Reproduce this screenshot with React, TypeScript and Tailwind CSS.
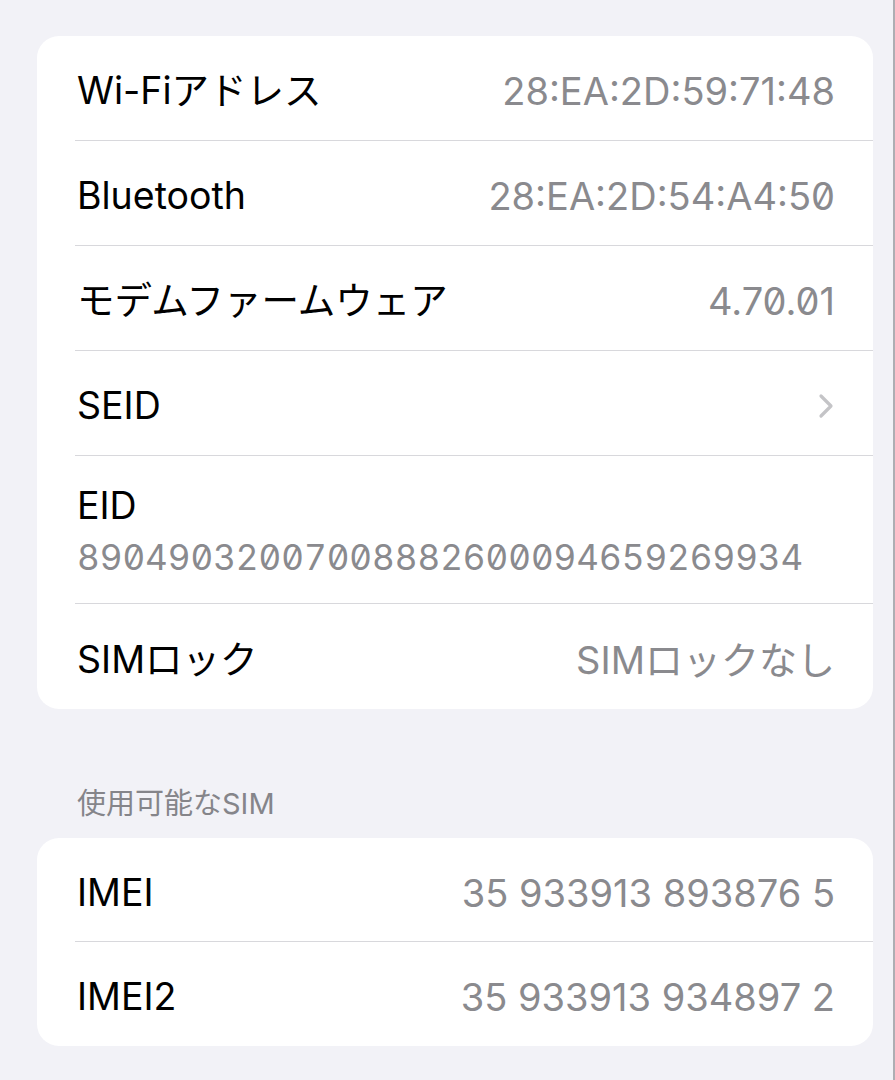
import React from 'react';

const font = { fontFamily: 'Inter, "Noto Sans CJK JP", sans-serif' };

type Row = { label: string; value?: string; chevron?: boolean; stacked?: boolean };

const deviceRows: Row[] = [
  { label: 'Wi-Fiアドレス', value: '28:EA:2D:59:71:48' },
  { label: 'Bluetooth', value: '28:EA:2D:54:A4:50' },
  { label: 'モデムファームウェア', value: '4.70.01' },
  { label: 'SEID', chevron: true },
  { label: 'EID', value: '89049032007008882600094659269934', stacked: true },
  { label: 'SIMロック', value: 'SIMロックなし' },
];

const simRows: Row[] = [
  { label: 'IMEI', value: '35 933913 893876 5' },
  { label: 'IMEI2', value: '35 933913 934897 2' },
];

const Chevron = () => (
  <svg width="16" height="26" viewBox="0 0 16 26" fill="none" className="mr-[1px]">
    <path d="M3 3 L13 13 L3 23" stroke="#c4c4c7" strokeWidth="3.2" strokeLinecap="round" strokeLinejoin="round" />
  </svg>
);

const SettingsRow = ({ row, last, h }: { row: Row; last: boolean; h: string }) => {
  const border = last ? '' : 'border-b border-[#d8d8dc]';

  if (row.stacked) {
    return (
      <div className={`ml-[38px] pl-[2px] pr-[38px] h-[148px] pt-[4px] flex flex-col justify-center ${border}`}>
        <div className="text-[37.5px] leading-[48px] text-black">{row.label}</div>
        <div className="text-[35px] leading-[48px] mt-[3px] text-[#8a8a8e] slashed-zero tabular-nums">{row.value}</div>
      </div>
    );
  }

  return (
    <div className={`ml-[38px] pl-[2px] pr-[38px] ${h} pt-[6px] flex items-center justify-between ${border}`}>
      <span className="text-[37.5px] leading-[48px] text-black">{row.label}</span>
      {row.chevron ? (
        <Chevron />
      ) : (
        <span className="text-[38px] leading-[48px] text-[#8a8a8e] slashed-zero">{row.value}</span>
      )}
    </div>
  );
};

const Card = ({ rows, h }: { rows: Row[]; h: string }) => (
  <div className="bg-white rounded-[22px] overflow-hidden">
    {rows.map((row, i) => (
      <SettingsRow key={row.label} row={row} h={h} last={i === rows.length - 1} />
    ))}
  </div>
);

export default function App() {
  return (
    <div className="min-h-screen w-full bg-[#f2f2f7] border-r-[2px] border-[#aeaeb3]" style={font}>
      <div className="pt-[36px] pl-[37px] pr-[20px]">
        <Card rows={deviceRows} h="h-[105px]" />

        {/* Section header */}
        <div className="pt-[77px] pb-[16px] pl-[40px] text-[29px] leading-[36px] text-[#85858a]">
          使用可能なSIM
        </div>

        <Card rows={simRows} h="h-[104px]" />
      </div>
    </div>
  );
}
